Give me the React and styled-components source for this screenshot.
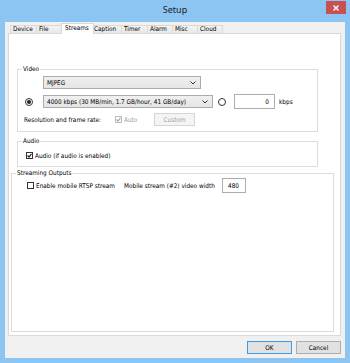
import React from 'react';
import styled, { createGlobalStyle } from 'styled-components';

const GlobalStyle = createGlobalStyle`
  html, body { margin: 0; padding: 0; background: #ffffff; }
  body {
    font-family: "DejaVu Sans Condensed", "DejaVu Sans", sans-serif;
    font-stretch: condensed;
    font-size: 6.4px;
    color: #000;
  }
  * { box-sizing: border-box; }
`;

const Window = styled.div`
  width: 350px;
  height: 363px;
  background: #8cc4f2;
  display: flex;
  flex-direction: column;
  padding: 0 5px 5px;
`;

const TitleBar = styled.div`
  height: 22px;
  display: grid;
  grid-template-columns: 1fr auto 1fr;
  align-items: start;
`;

const Title = styled.div`
  grid-column: 2;
  font-family: "Noto Sans", "Open Sans", sans-serif;
  font-stretch: normal;
  font-size: 9px;
  line-height: 20px;
  color: #222;
`;

const CloseButton = styled.div`
  grid-column: 3;
  justify-self: end;
  margin: 1px -1px 0 0;
  width: 20px;
  height: 13px;
  background: #c75050;
  display: flex;
  align-items: center;
  justify-content: center;
`;

const Client = styled.div`
  flex: 1;
  background: #f0f0f0;
  display: flex;
  flex-direction: column;
  padding: 1px 4px 4px 3px;
`;

const TabStrip = styled.div`
  height: 10px;
  display: flex;
  align-items: flex-end;
  padding-left: 2px;
`;

const Tab = styled.div`
  width: ${p => p.$w}px;
  height: ${p => (p.$active ? 11 : 8)}px;
  margin-left: ${p => (p.$first ? 0 : p.$active ? -3 : -1)}px;
  margin-right: ${p => (p.$active ? -2 : 0)}px;
  margin-bottom: ${p => (p.$active ? -1 : 0)}px;
  border: 1px solid #d9d9d9;
  border-bottom: none;
  background: ${p => (p.$active ? '#ffffff' : 'linear-gradient(#f3f3f3, #e8e8e8)')};
  padding-left: ${p => (p.$active ? 3 : 2)}px;
  line-height: ${p => (p.$active ? 9 : 7)}px;
  white-space: nowrap;
  position: relative;
  z-index: ${p => (p.$active ? 2 : 1)};
`;

const Panel = styled.div`
  flex: 1;
  background: #ffffff;
  border: 1px solid #d9d9d9;
  display: flex;
  flex-direction: column;
`;

const Group = styled.fieldset`
  margin: ${p => p.$mt}px 0 ${p => p.$mb || 0}px ${p => p.$ml}px;
  width: ${p => p.$w}px;
  padding: 0 0 ${p => p.$pb || 0}px 0;
  border: 1px solid #dcdcdc;
  min-width: 0;
  ${p => (p.$grow ? 'flex: 1;' : '')}
`;

const Legend = styled.legend`
  margin-left: 4px;
  padding: 0 1px;
  line-height: 10px;
  white-space: nowrap;
`;

const Row = styled.div`
  display: flex;
  align-items: center;
  height: ${p => p.$h}px;
  margin-top: ${p => p.$mt || 0}px;
  padding-left: ${p => p.$pl || 0}px;
`;

const Text = styled.span`
  display: inline-block;
  white-space: nowrap;
  width: ${p => (p.$w ? `${p.$w}px` : 'auto')};
  margin-left: ${p => p.$ml || 0}px;
  color: ${p => (p.$disabled ? '#9a9a9a' : '#000')};
`;

const Dropdown = styled.div`
  width: ${p => p.$w}px;
  height: 13px;
  margin-left: ${p => p.$ml || 0}px;
  border: 1px solid #acacac;
  background: linear-gradient(#f0f0f0, #e5e5e5);
  display: flex;
  align-items: center;
  justify-content: space-between;
  padding: 0 4px 0 3px;
  white-space: nowrap;
`;

const Radio = styled.span`
  width: 8px;
  height: 8px;
  margin-left: ${p => p.$ml || 0}px;
  border-radius: 50%;
  border: 1px solid #333;
  background: #fff;
  display: flex;
  align-items: center;
  justify-content: center;
  flex: none;
  &::after {
    content: '';
    width: 4px;
    height: 4px;
    border-radius: 50%;
    background: ${p => (p.$checked ? '#222' : 'transparent')};
  }
`;

const Check = styled.span`
  width: 7px;
  height: 7px;
  margin-left: ${p => p.$ml || 0}px;
  border: 1px solid ${p => (p.$disabled ? '#bcbcbc' : '#333')};
  background: #fff;
  display: flex;
  align-items: center;
  justify-content: center;
  flex: none;
`;

const TextBox = styled.div`
  width: ${p => p.$w}px;
  height: 15px;
  margin-left: ${p => p.$ml || 0}px;
  border: 1px solid #abadb3;
  background: #fff;
  display: flex;
  align-items: center;
  justify-content: ${p => (p.$right ? 'flex-end' : 'flex-start')};
  padding: 0 5px;
`;

const Button = styled.div`
  width: ${p => p.$w}px;
  height: 13px;
  margin-left: ${p => p.$ml || 0}px;
  border: 1px solid ${p => (p.$disabled ? '#d5d5d5' : p.$default ? '#3c9bea' : '#adadad')};
  background: ${p => (p.$disabled ? '#f4f4f4' : '#e1e1e1')};
  color: ${p => (p.$disabled ? '#a0a0a0' : '#000')};
  display: flex;
  align-items: center;
  justify-content: center;
`;

const ButtonRow = styled.div`
  display: flex;
  justify-content: flex-end;
  gap: 4px;
  margin-top: 5px;
`;

const Chevron = () => (
  <svg width="6" height="4" viewBox="0 0 6 4">
    <polyline points="0.5,0.5 3,3 5.5,0.5" fill="none" stroke="#333" strokeWidth="1" />
  </svg>
);

const CheckMark = ({ color }) => (
  <svg width="5" height="5" viewBox="0 0 5 5">
    <polyline points="0.5,2.5 2,4 4.5,0.8" fill="none" stroke={color} strokeWidth="1.2" />
  </svg>
);

const tabs = [
  { name: 'Device', w: 27 },
  { name: 'File', w: 28 },
  { name: 'Streams', w: 33, active: true },
  { name: 'Caption', w: 31 },
  { name: 'Timer', w: 27 },
  { name: 'Alarm', w: 26 },
  { name: 'Misc', w: 26 },
  { name: 'Cloud', w: 26 },
];

export default function App() {
  return (
    <>
      <GlobalStyle />
      <Window>
        <TitleBar>
          <Title>Setup</Title>
          <CloseButton>
            <svg width="6" height="6" viewBox="0 0 6 6">
              <path d="M0.5 0.5 L5.5 5.5 M5.5 0.5 L0.5 5.5" stroke="#fff" strokeWidth="1.4" />
            </svg>
          </CloseButton>
        </TitleBar>
        <Client>
          <TabStrip>
            {tabs.map((t, i) => (
              <Tab key={t.name} $w={t.w} $active={t.active} $first={i === 0}>
                {t.name}
              </Tab>
            ))}
          </TabStrip>
          <Panel>
            <Group $mt={30} $ml={8} $w={301} $pb={5}>
              <Legend>Video</Legend>
              <Row $h={13} $mt={2} $pl={25}>
                <Dropdown $w={158}>
                  <span>MJPEG</span>
                  <Chevron />
                </Dropdown>
              </Row>
              <Row $h={15} $mt={5} $pl={7}>
                <Radio $checked />
                <Dropdown $w={170} $ml={10}>
                  <span>4000 kbps (30 MB/min, 1.7 GB/hour, 41 GB/day)</span>
                  <Chevron />
                </Dropdown>
                <Radio $ml={5} />
                <TextBox $w={41} $ml={8} $right>0</TextBox>
                <Text $ml={4}>kbps</Text>
              </Row>
              <Row $h={13} $mt={4} $pl={6}>
                <Text $w={91}>Resolution and frame rate:</Text>
                <Check $disabled>
                  <CheckMark color="#a8a8a8" />
                </Check>
                <Text $w={30} $ml={2} $disabled>Auto</Text>
                <Button $w={41} $disabled>Custom</Button>
              </Row>
            </Group>
            <Group $mt={4} $ml={8} $w={301} $pb={6}>
              <Legend>Audio</Legend>
              <Row $h={9} $mt={5} $pl={8}>
                <Check>
                  <CheckMark color="#222" />
                </Check>
                <Text $ml={2}>Audio (if audio is enabled)</Text>
              </Row>
            </Group>
            <Group $mt={1} $ml={2} $w={323} $mb={3} $grow>
              <Legend>Streaming Outputs</Legend>
              <Row $h={15} $pl={15}>
                <Check />
                <Text $w={88} $ml={2}>Enable mobile RTSP stream</Text>
                <Text $w={98}>Mobile stream (#2) video width</Text>
                <TextBox $w={24}>480</TextBox>
              </Row>
            </Group>
          </Panel>
          <ButtonRow>
            <Button $w={45} $default>OK</Button>
            <Button $w={45}>Cancel</Button>
          </ButtonRow>
        </Client>
      </Window>
    </>
  );
}
